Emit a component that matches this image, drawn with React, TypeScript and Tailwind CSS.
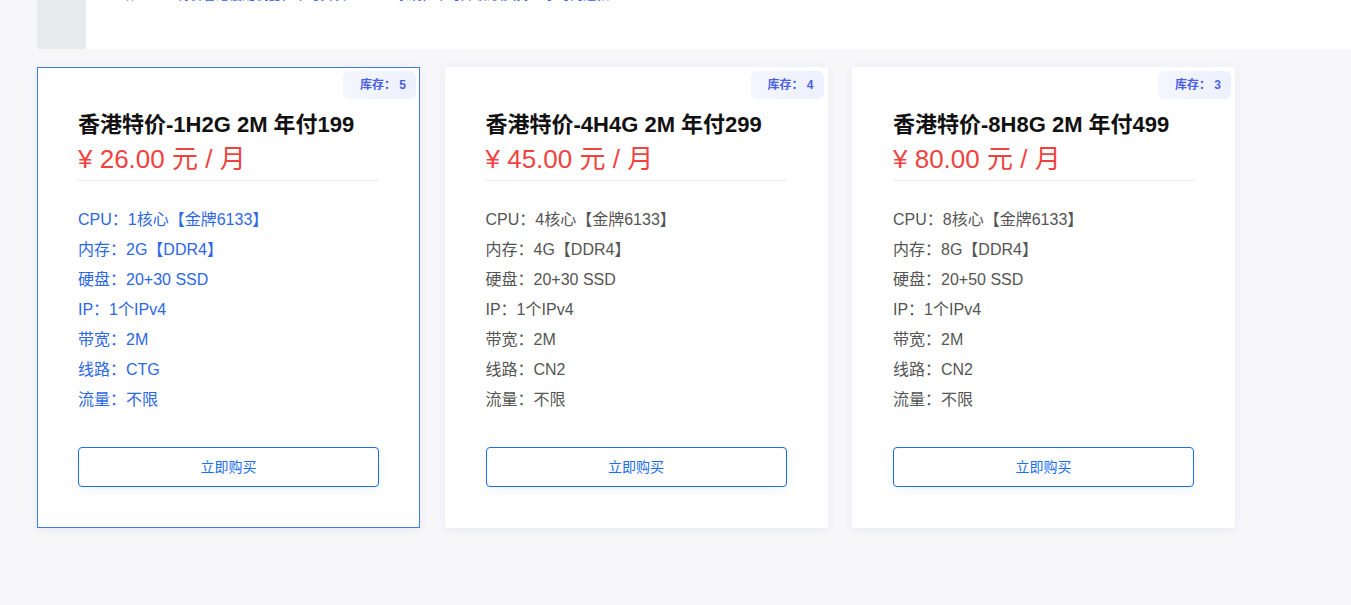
import React from 'react';

interface Plan {
  name: string;
  price: string;
  stock: number;
  specs: string[];
}

const plans: Plan[] = [
  {
    name: '香港特价-1H2G 2M 年付199',
    price: '26.00',
    stock: 5,
    specs: ['CPU：1核心【金牌6133】', '内存：2G【DDR4】', '硬盘：20+30 SSD', 'IP：1个IPv4', '带宽：2M', '线路：CTG', '流量：不限'],
  },
  {
    name: '香港特价-4H4G 2M 年付299',
    price: '45.00',
    stock: 4,
    specs: ['CPU：4核心【金牌6133】', '内存：4G【DDR4】', '硬盘：20+30 SSD', 'IP：1个IPv4', '带宽：2M', '线路：CN2', '流量：不限'],
  },
  {
    name: '香港特价-8H8G 2M 年付499',
    price: '80.00',
    stock: 3,
    specs: ['CPU：8核心【金牌6133】', '内存：8G【DDR4】', '硬盘：20+50 SSD', 'IP：1个IPv4', '带宽：2M', '线路：CN2', '流量：不限'],
  },
];

function PlanCard({ plan, active }: { plan: Plan; active: boolean }) {
  return (
    <div
      className={`relative w-[383px] bg-white px-[40px] pt-[42px] pb-[40px] shadow-[0_2px_10px_rgba(40,50,110,0.07)] border ${
        active ? 'border-[#3f7ae6]' : 'border-transparent'
      }`}
    >
      <div className="absolute top-[3px] right-[3px] h-[28px] w-[73px] rounded-md bg-gradient-to-r from-[#f4f6fe] to-[#edf1fe] flex items-center justify-end pr-[10px] text-[12px] font-bold text-[#4b5fe6]">
        库存：&nbsp;{plan.stock}
      </div>
      <h3 className="text-[22px] leading-[30px] font-bold text-[#111] whitespace-nowrap">{plan.name}</h3>
      <div className="text-[26px] leading-[38px] text-[#f0433f] pb-[2px] border-b border-[#ececec]">
        ¥ {plan.price} 元 / 月
      </div>
      <ul className={`mt-[24px] text-[16px] leading-[30px] ${active ? 'text-[#2d67e8]' : 'text-[#555]'}`}>
        {plan.specs.map(s => (
          <li key={s}>{s}</li>
        ))}
      </ul>
      <button className="mt-[32px] w-full h-[40px] rounded border border-[#1a6cf5] bg-white text-[14px] text-[#1a6cf5] shadow-[0_4px_14px_rgba(40,60,160,0.06)]">
        立即购买
      </button>
    </div>
  );
}

export default function App() {
  return (
    <div
      className="min-h-[605px] w-full bg-[#f7f7fa] overflow-hidden"
      style={{ fontFamily: '"Liberation Sans", Arial, "Noto Sans CJK SC", sans-serif' }}
    >
      <div className="ml-[37px] -mt-[20px] flex h-[69px] bg-white">
        <div className="w-[49px] bg-[#e9eaec]" />
        <div className="flex pt-[6px] pl-[22px] text-[13px] leading-[18px] text-[#3d5cf5]">
          <span className="w-[69px]">介绍：</span>
          <span>特价香港低配机器，不可安装windows系统，不可升级,仅支持48小时内退款</span>
        </div>
      </div>
      <div className="mt-[18px] ml-[37px] flex gap-[24.5px] items-start">
        {plans.map((p, i) => (
          <PlanCard key={p.name} plan={p} active={i === 0} />
        ))}
      </div>
    </div>
  );
}
